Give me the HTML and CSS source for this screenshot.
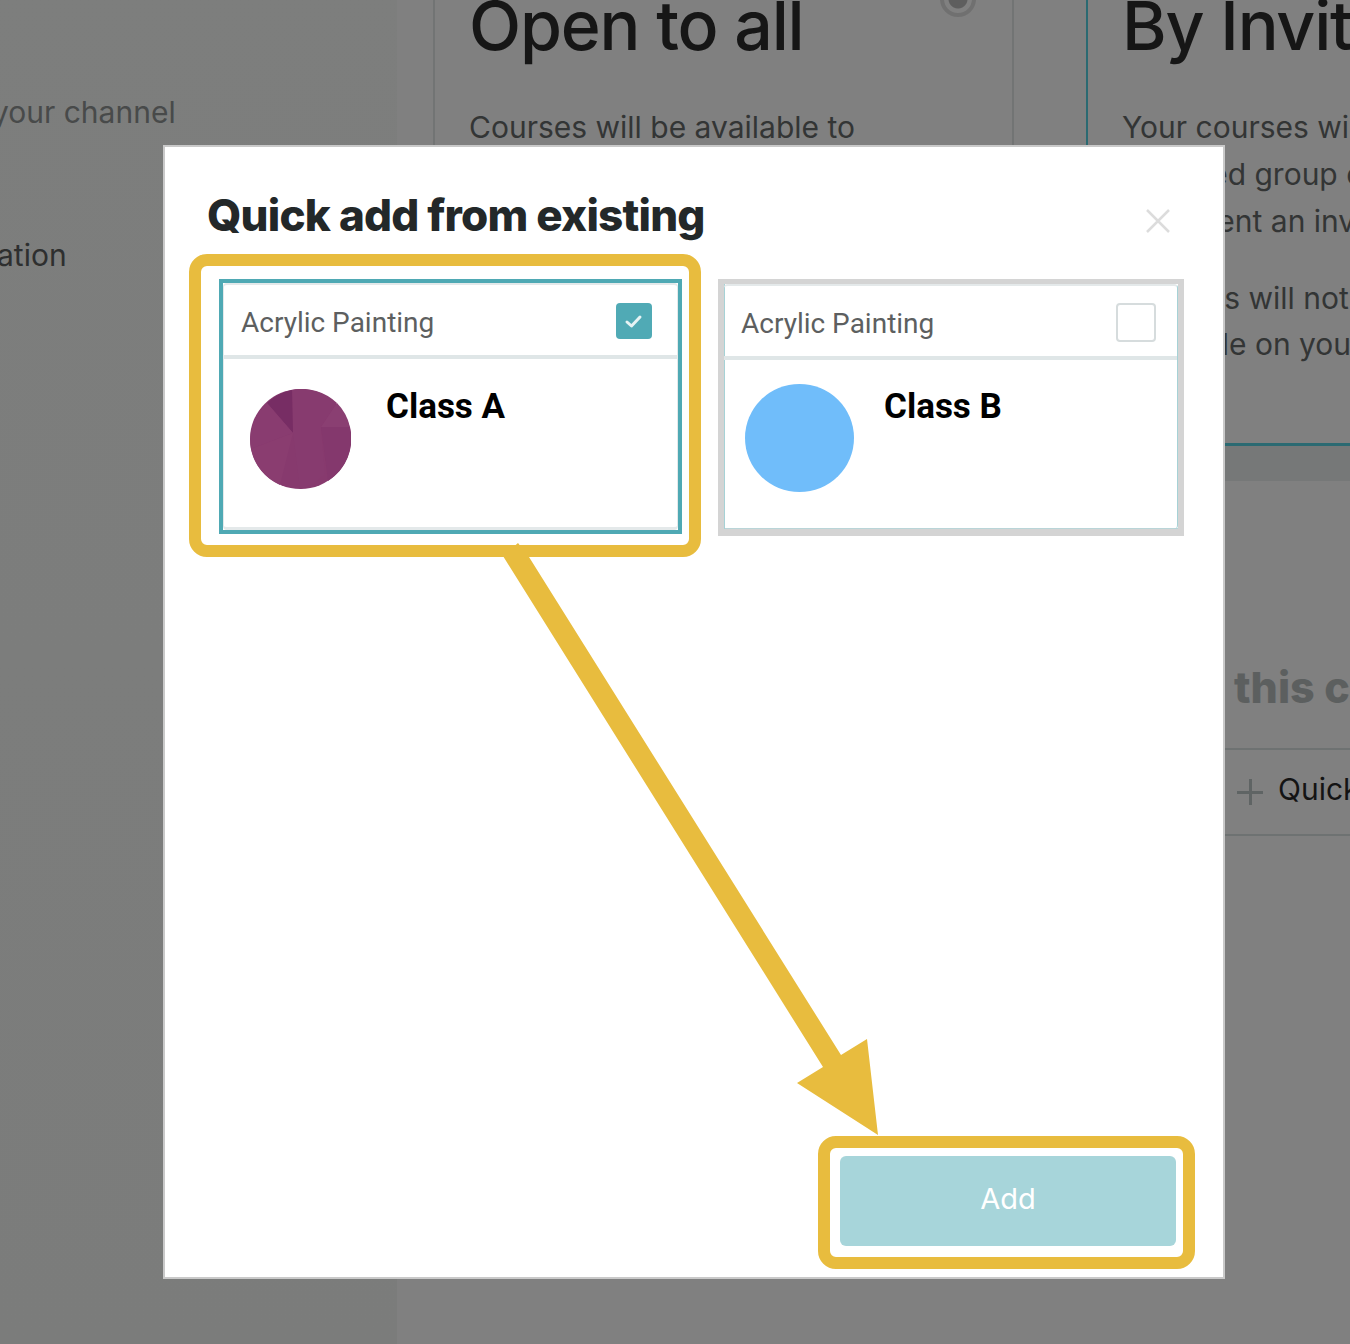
FILE: index.html
```html
<!DOCTYPE html>
<html lang="en">
<head>
<meta charset="utf-8">
<title>Quick add from existing</title>
<link rel="stylesheet" href="styles.css">
</head>
<body>
<div class="page">
  <div class="backdrop">
    <aside class="side">
      <p class="side-line side-first">your channel</p>
      <p class="side-line side-second">ation</p>
    </aside>
    <main class="main">
      <div class="options">
        <section class="option">
          <div class="radio"></div>
          <h2 class="option-title">Open to all</h2>
          <p class="option-text">Courses will be available to</p>
        </section>
        <section class="option option-active">
          <h2 class="option-title">By Invitation</h2>
          <p class="option-text">Your courses will</p>
          <p class="option-text">Selected group of</p>
          <p class="option-text">been sent an invite</p>
          <p class="option-text option-gap">Courses will not</p>
          <p class="option-text">available on your</p>
        </section>
      </div>
      <div class="band"></div>
      <div class="lower">
        <h3 class="lower-title">this course</h3>
        <div class="quick-row"><span class="plus"></span><span class="quick-label">Quick add</span></div>
      </div>
    </main>
  </div>

  <div class="modal">
    <header class="modal-head">
      <h1 class="modal-title">Quick add from existing</h1>
      <svg class="close" viewBox="0 0 24 24" width="24" height="24"><path d="M1 1 23 23M23 1 1 23"/></svg>
    </header>
    <div class="cards">
      <article class="card card-on">
        <div class="card-inner">
          <div class="card-top">
            <span class="card-name">Acrylic Painting</span>
            <span class="check check-on"><svg viewBox="0 0 36 36" width="36" height="36"><path d="M11 19 15.500 23 24 14"/></svg></span>
          </div>
          <div class="card-body">
            <svg class="pic pic-a" viewBox="0 0 101 100" width="101" height="100">
              <ellipse cx="50.500" cy="50" rx="50.500" ry="50" fill="#873a6e"/>
              <path d="M43 44 42 1 A50 50 0 0 1 87 14 L71 38 75 85 A50 50 0 0 1 50 100 Z" fill="#873b6f"/>
              <path d="M43 44 42 1 A50 50 0 0 0 17 14Z" fill="#772d64"/>
              <path d="M71 38 87 14 A50 50 0 0 1 100 38Z" fill="#8a3f72"/>
              <path d="M43 44 17 14 A50 50 0 0 0 1 60 Z" fill="#893c70"/>
              <path d="M43 44 1 60 A50 50 0 0 0 30 96Z" fill="#8a3d70"/>
              <path d="M71 38 100 38 A50 50 0 0 1 78 92Z" fill="#84386d"/>
            </svg>
            <h4 class="class-name class-a">Class A</h4>
          </div>
        </div>
      </article>
      <article class="card card-off">
        <div class="card-inner">
          <div class="card-top">
            <span class="card-name">Acrylic Painting</span>
            <span class="check check-off"></span>
          </div>
          <div class="card-body">
            <div class="pic-b"></div>
            <h4 class="class-name class-b">Class B</h4>
          </div>
        </div>
      </article>
    </div>
    <footer class="modal-foot">
      <button class="add" type="button">Add</button>
    </footer>
  </div>

  <svg class="marks" viewBox="0 0 1350 1344" width="1350" height="1344">
    <polygon class="mark-fill" points="518,543 503,556 823,1067 797,1083 878,1135 867,1039 841,1055 529,557"/>
    <rect class="mark-box" x="195" y="260" width="500" height="291" rx="12"/>
    <rect class="mark-box" x="824" y="1142" width="365" height="121" rx="12"/>
  </svg>
</div>
</body>
</html>
```

FILE: styles.css
```css
* { box-sizing: border-box; }
html, body { margin: 0; padding: 0; }
body { font-family: "Roboto", "Liberation Sans", sans-serif; background: #808080; }

.page {
  position: relative;
  width: 1350px;
  height: 1344px;
  overflow: hidden;
  background: #808080;
}

/* dimmed page behind the dialog */
.backdrop {
  display: flex;
  height: 100%;
  margin-top: -30px;
  color: #1a1a1a;
}
.side {
  width: 433px;
  flex: none;
  height: calc(100% + 30px);
  padding-top: 124px;
  background: linear-gradient(#7d7e7d, #7b7c7b) left top / 397px 100% no-repeat;
  font-family: "Inter", "Liberation Sans", sans-serif;
  font-size: 30px;
}
.side-line { margin: 0; line-height: 36px; white-space: nowrap; }
.side-first { margin-left: -8px; color: #484a4a; }
.side-second { margin-top: 107px; margin-left: -3px; color: #2e2f2f; }

.main { flex: 1; min-width: 0; }
.options { display: flex; gap: 72px; height: 476px; }
.option {
  position: relative;
  flex: none;
  width: 581px;
  height: 476px;
  padding: 0 34px;
  border-left: 2px solid #727474;
  border-right: 2px solid #727474;
}
.option-active {
  width: 400px;
  padding-right: 0;
  border-left: 2px solid #2b6a72;
  border-right: 0;
  border-bottom: 3px solid #2b6a72;
}
.radio {
  position: absolute;
  top: 11px;
  right: 36px;
  width: 36px;
  height: 36px;
  border: 4px solid #707070;
  border-radius: 50%;
  background: radial-gradient(circle, #5e5e5e 0 9px, #808080 10px);
}
.option-title {
  margin: 0;
  padding-top: 17px;
  font-family: "Inter", "Liberation Sans", sans-serif;
  font-weight: 500;
  font-size: 68px;
  line-height: 76px;
  letter-spacing: -1.200px;
  white-space: nowrap;
  color: #161616;
}
.option-text {
  margin: 0;
  font-family: "Inter", "Liberation Sans", sans-serif;
  font-size: 30px;
  line-height: 47px;
  white-space: nowrap;
  color: #333535;
}
.option-title + .option-text { margin-top: 41px; }
.option-text + .option-text { margin-top: -0.200px; }
.option-text.option-gap { margin-top: 30px; }

.band { height: 35px; margin-left: 792px; background: #767878; }
.lower { margin-left: 792px; padding-top: 176px; }
.lower-title {
  margin: 0;
  padding-left: 9px;
  font-family: "Inter", "Liberation Sans", sans-serif;
  font-weight: 800;
  font-size: 43px;
  line-height: 60px;
  white-space: nowrap;
  color: #5c5f5f;
}
.quick-row {
  display: flex;
  align-items: center;
  gap: 15px;
  height: 88px;
  margin-top: 31px;
  padding-left: 12px;
  border-top: 2px solid #6e7272;
  border-bottom: 2px solid #6e7272;
}
.plus {
  display: block;
  width: 26px;
  height: 26px;
  flex: none;
  background:
    linear-gradient(#5f6464, #5f6464) center / 26px 3px no-repeat,
    linear-gradient(#5f6464, #5f6464) center / 3px 26px no-repeat;
}
.quick-label {
  padding-bottom: 6px;
  font-family: "Inter", "Liberation Sans", sans-serif;
  font-size: 30px;
  white-space: nowrap;
  color: #141414;
}

/* dialog */
.modal {
  position: absolute;
  left: 163px;
  top: 145px;
  width: 1062px;
  height: 1134px;
  display: flex;
  flex-direction: column;
  background: #fff;
  border: 2px solid #c9c9c9;
}
.modal-head {
  display: flex;
  justify-content: space-between;
  align-items: center;
  height: 132px;
  padding: 4px 53px 0 42px;
}
.modal-title {
  margin: 0;
  font-family: "Inter", "Liberation Sans", sans-serif;
  font-weight: 800;
  font-size: 44px;
  letter-spacing: -0.800px;
  color: #232829;
  white-space: nowrap;
}
.close { fill: none; stroke: #dcdcdc; stroke-width: 2.500; margin-top: 11px; }
.cards {
  display: flex;
  gap: 36px;
  padding-left: 54px;
}
.card { background: #fff; flex: none; }
.card-on { width: 463px; height: 255px; border: 4px solid #4fa9b4; }
.card-off {
  width: 466px;
  height: 257px;
  border: 6px solid #d4d4d4;
  border-top-width: 5px;
  border-bottom-width: 7px;
  box-shadow: inset 1px 0 0 #a6d2d6, inset 0 -1px 0 #b9d5d8;
}
.card-inner {
  display: flex;
  flex-direction: column;
  height: 100%;
  border-top: 2px solid #e4e9ea;
  border-radius: 4px;
}
.card-on .card-inner { border: 1px solid #e4e9ea; border-top-width: 2px; border-bottom-width: 3px; }
.card-off .card-inner { border-right: 1px solid #a6d2d6; }
.card-top {
  display: flex;
  justify-content: space-between;
  align-items: center;
  height: 74px;
  flex: none;
  padding: 2px 25px 0 17px;
  border-bottom: 4px solid #dfe6e7;
}
.card-off .card-top { padding-right: 21px; }
.card-name { margin-top: 3px; font-size: 28px; color: #5d5f60; white-space: nowrap; }
.check { display: block; flex: none; border-radius: 4px; }
.check-on { width: 36px; height: 36px; background: #50aab5; }
.check-on svg { display: block; fill: none; stroke: #e6f3f4; stroke-width: 3; stroke-linecap: round; stroke-linejoin: round; }
.check-off { width: 40px; height: 39px; background: #fff; border: 2px solid #d6dcdd; }
.card-body { position: relative; display: flex; flex: 1; align-items: flex-start; }
.pic { display: block; flex: none; }
.pic-a { margin: 30px 0 0 26px; }
.pic-b { flex: none; width: 109px; height: 108px; margin: 24px 0 0 21px; border-radius: 50%; background: #70bdfa; }
.class-name {
  margin: 0;
  font-size: 35px;
  font-weight: 700;
  line-height: 42px;
  color: #000;
  white-space: nowrap;
}
.class-a { margin: 27px 0 0 35px; }
.class-b { margin: 26px 0 0 30px; }

.modal-foot {
  display: flex;
  justify-content: flex-end;
  margin-top: auto;
  padding: 0 47px 31px 0;
}
.add {
  width: 336px;
  height: 90px;
  padding: 0 0 5px;
  border: 0;
  border-radius: 6px;
  background: #a7d5da;
  color: #fff;
  font-family: "Inter", "Liberation Sans", sans-serif;
  font-size: 29px;
}

/* annotation drawn on top of the screenshot */
.marks { position: absolute; left: 0; top: 0; pointer-events: none; }
.mark-fill { fill: #e8bc3e; }
.mark-box { fill: none; stroke: #e8bc3e; stroke-width: 12; }
```
